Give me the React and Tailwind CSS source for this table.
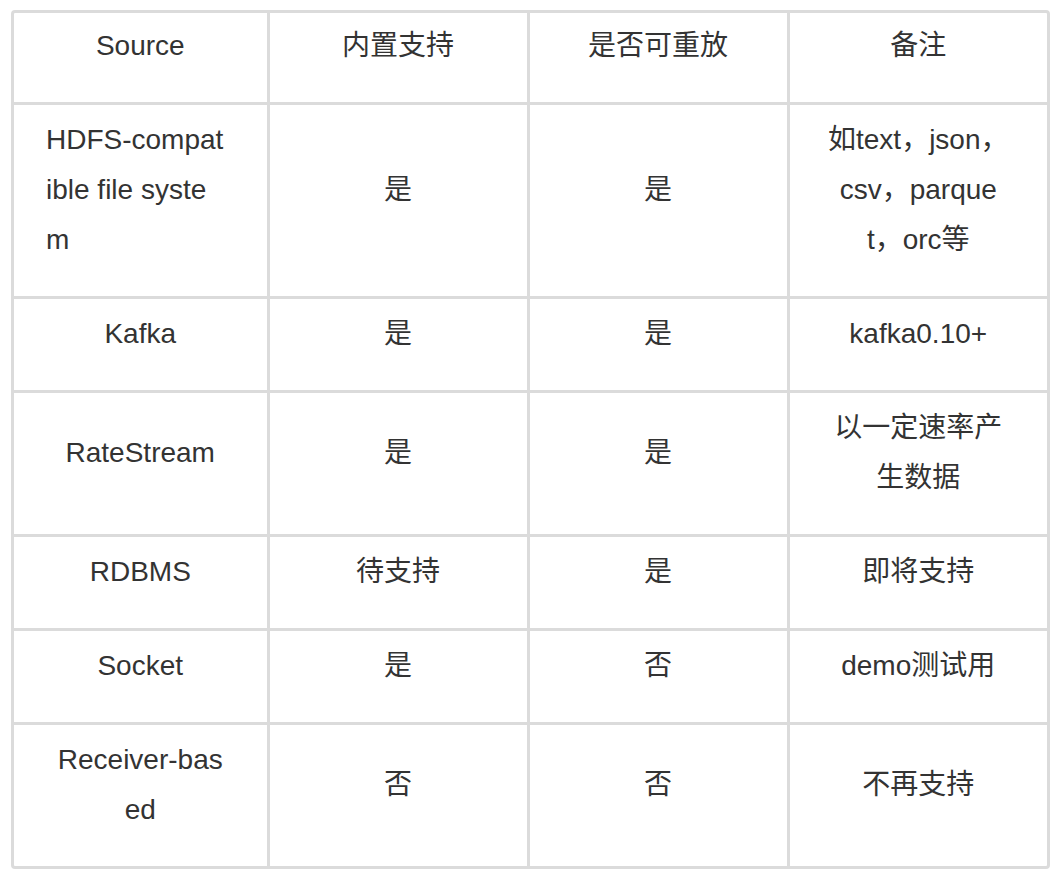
const HEAD = ['Source', '内置支持', '是否可重放', '备注']

// each cell is a list of display lines, broken where the reference breaks them
const ROWS = [
  [['HDFS-compat', 'ible file syste', 'm'], ['是'], ['是'], ['如text，json，', 'csv，parque', 't，orc等']],
  [['Kafka'], ['是'], ['是'], ['kafka0.10+']],
  [['RateStream'], ['是'], ['是'], ['以一定速率产', '生数据']],
  [['RDBMS'], ['待支持'], ['是'], ['即将支持']],
  [['Socket'], ['是'], ['否'], ['demo测试用']],
  [['Receiver-bas', 'ed'], ['否'], ['否'], ['不再支持']],
]

const COL_W = ['w-[254px]', 'w-[260px]', 'w-[260px]', 'w-[259px]']

export default function App() {
  return (
    <div
      className="min-h-[874px] bg-white pt-[10px] pl-[11px] text-[#333333] text-[28px] leading-[50px]"
      style={{ fontFamily: '"Liberation Sans", "Noto Sans CJK SC", sans-serif' }}
    >
      <div className="w-[1039px] border-[3px] border-[#dbdbdb] rounded-[4px] overflow-hidden">
        <table className="w-full table-fixed border-collapse">
          <colgroup>
            {COL_W.map((w, i) => <col key={i} className={w} />)}
          </colgroup>
          <thead>
            <tr>
              {HEAD.map((h, i) => (
                <th
                  key={h}
                  className={`font-normal text-center align-middle pt-[8px] pb-[31px] px-[20px] border-b-[3px] border-[#dbdbdb] ${i < 3 ? 'border-r-[3px]' : ''}`}
                >
                  {h}
                </th>
              ))}
            </tr>
          </thead>
          <tbody>
            {ROWS.map((row, r) => {
              const last = r === ROWS.length - 1
              return (
                <tr key={r}>
                  {row.map((cell, c) => {
                    // the first HDFS cell wraps flush left in the reference
                    const flush = r === 0 && c === 0
                    return (
                      <td
                        key={c}
                        className={`align-middle pt-[10px] pb-[31px] border-[#dbdbdb] ${flush ? 'text-left pl-[32px] pr-[10px]' : 'text-center px-[20px]'} ${c < 3 ? 'border-r-[3px]' : ''} ${last ? '' : 'border-b-[3px]'}`}
                      >
                        {cell.map((l, i) => (
                          <span key={i} className="block whitespace-nowrap">{l}</span>
                        ))}
                      </td>
                    )
                  })}
                </tr>
              )
            })}
          </tbody>
        </table>
      </div>
    </div>
  )
}
